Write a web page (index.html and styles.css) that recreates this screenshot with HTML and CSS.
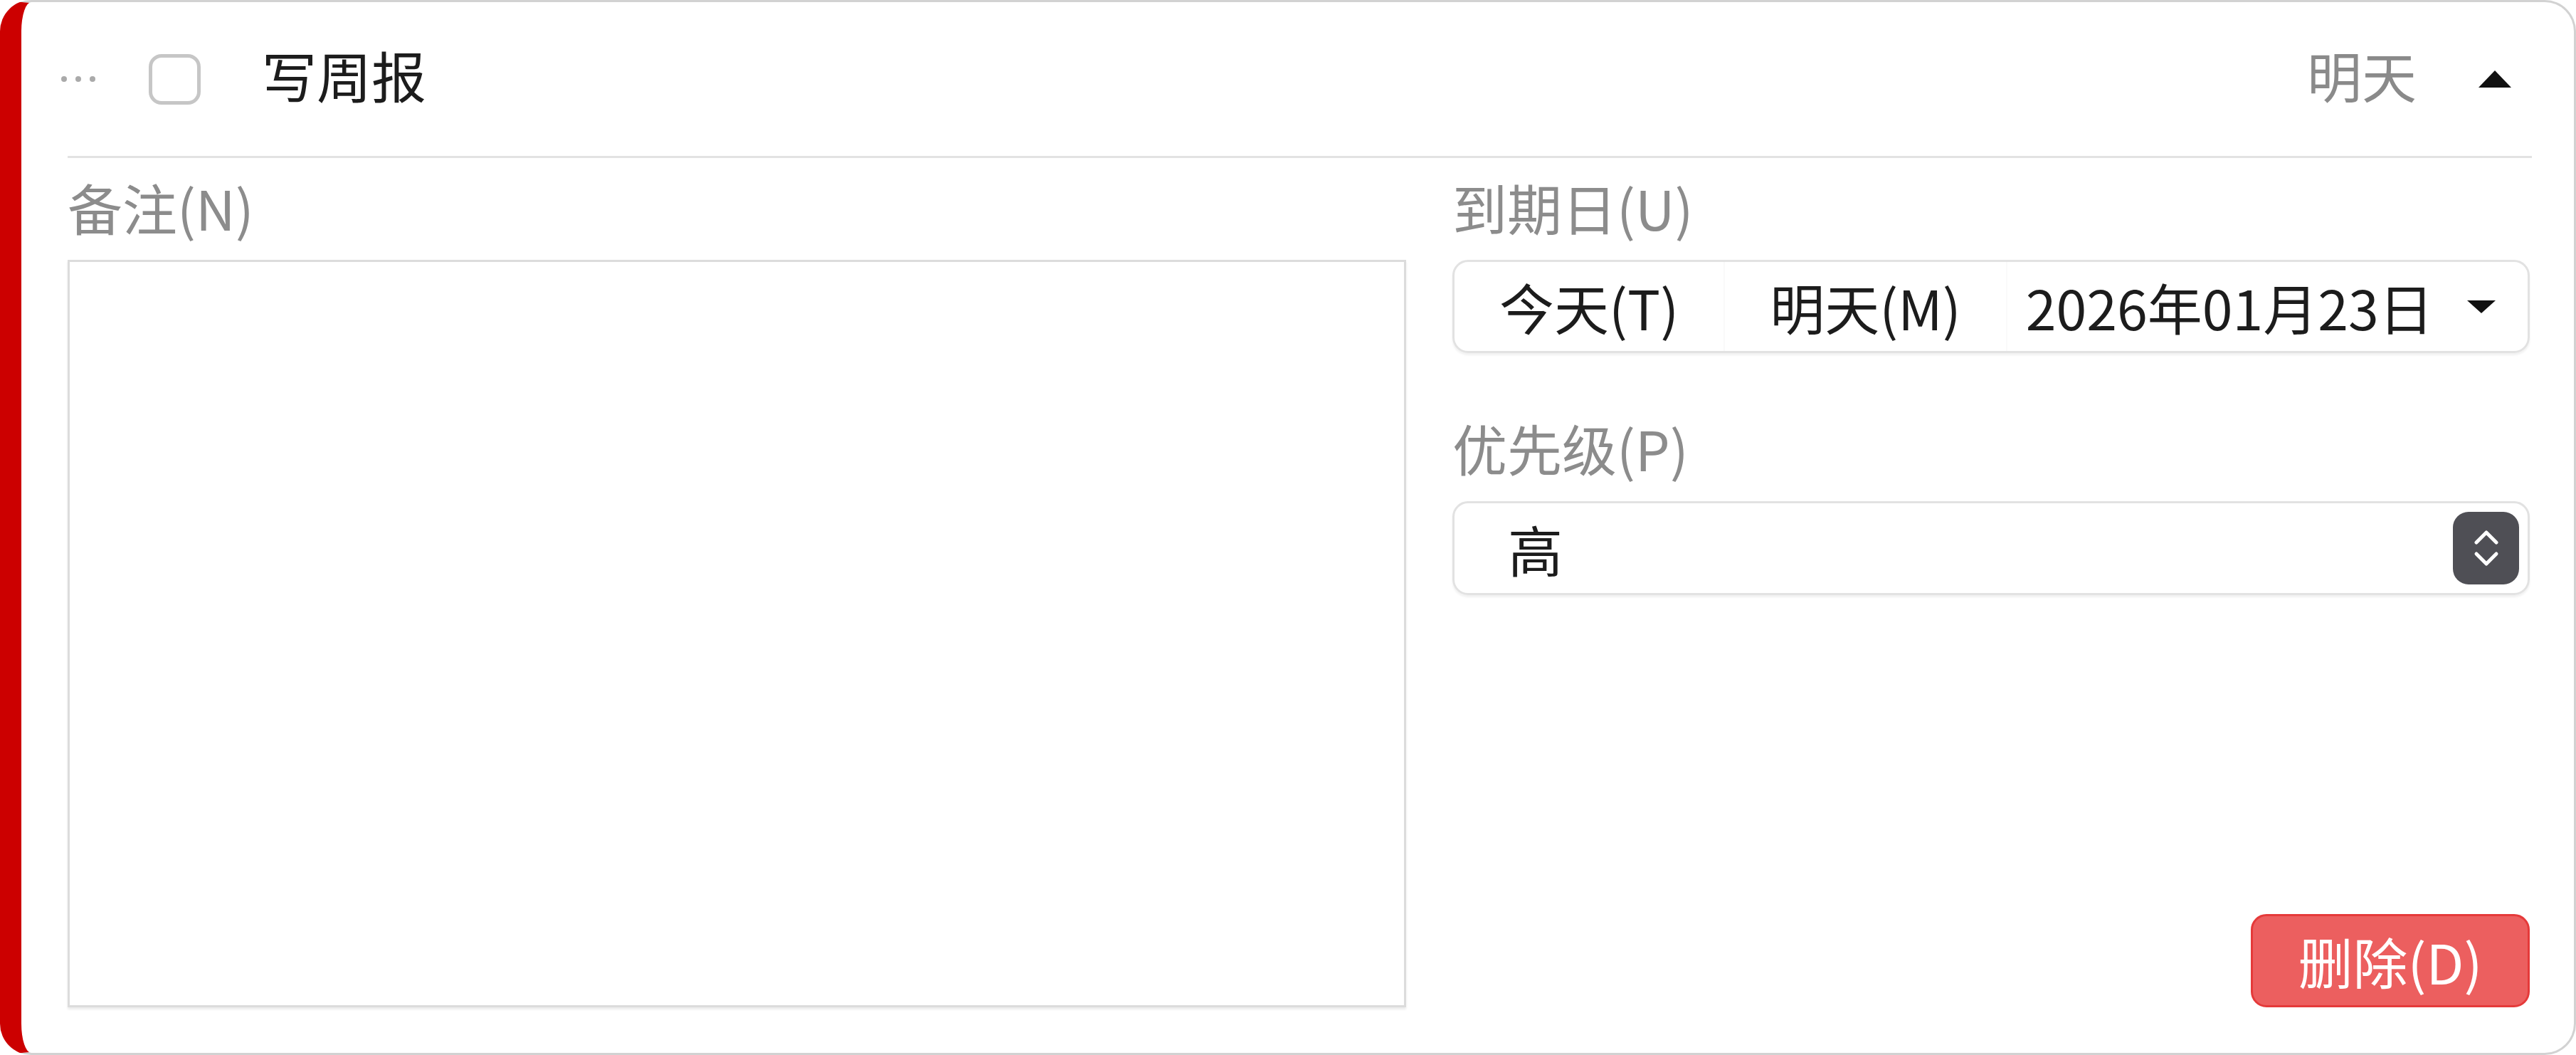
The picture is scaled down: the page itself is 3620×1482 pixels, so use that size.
FILE: index.html
```html
<!DOCTYPE html>
<html lang="zh-CN">
<head>
    <meta charset="UTF-8">
    <meta name="viewport" content="width=device-width, initial-scale=1.0">
    <title>写周报</title>
    <link rel="stylesheet" href="styles.css">
</head>
<body>
    <div class="task-card">
        <div class="task-header">
            <svg class="drag-handle" width="50" height="10" viewBox="0 0 50 10">
                <circle cx="5" cy="5" r="4" fill="#aaaaaa"/>
                <circle cx="25" cy="5" r="4" fill="#aaaaaa"/>
                <circle cx="45" cy="5" r="4" fill="#aaaaaa"/>
            </svg>
            <span class="checkbox"></span>
            <span class="task-title">写周报</span>
            <span class="task-due">明天</span>
            <svg class="collapse-icon" width="48" height="26" viewBox="0 0 48 26">
                <polygon points="24,1 47,25 1,25" fill="#111111"/>
            </svg>
        </div>
        <div class="divider"></div>
        <div class="task-body">
            <div class="notes-col">
                <label class="field-label">备注(N)</label>
                <textarea class="notes"></textarea>
            </div>
            <div class="side-col">
                <label class="field-label">到期日(U)</label>
                <div class="date-picker">
                    <span class="date-seg">今天(T)</span>
                    <span class="date-seg">明天(M)</span>
                    <span class="date-seg date-value">
                        2026年01月23日
                        <svg width="42" height="20" viewBox="0 0 42 20">
                            <polygon points="1,1 41,1 21,19" fill="#111111"/>
                        </svg>
                    </span>
                </div>
                <label class="field-label priority-label">优先级(P)</label>
                <div class="priority-select">
                    <span class="priority-value">高</span>
                    <span class="stepper">
                        <svg width="40" height="64" viewBox="0 0 40 64">
                            <polyline points="6,24 20,10 34,24" fill="none" stroke="#ffffff" stroke-width="5" stroke-linecap="round" stroke-linejoin="round"/>
                            <polyline points="6,40 20,54 34,40" fill="none" stroke="#ffffff" stroke-width="5" stroke-linecap="round" stroke-linejoin="round"/>
                        </svg>
                    </span>
                </div>
                <div class="actions">
                    <button class="delete-btn">删除(D)</button>
                </div>
            </div>
        </div>
    </div>
</body>
</html>
```

FILE: styles.css
```css
html, body {
    margin: 0;
    padding: 0;
    background: #ffffff;
}

body {
    font-family: "Noto Sans CJK SC", "Noto Sans", sans-serif;
    font-size: 77px;
    color: #1c1c1c;
}

.task-card {
    box-sizing: border-box;
    width: 100vw;
    height: 100vh;
    border: 3px solid #d2d2d2;
    border-left: 30px solid #cc0000;
    border-radius: 44px;
    display: flex;
    flex-direction: column;
}

.task-header {
    height: 216px;
    display: flex;
    align-items: center;
    padding: 0 87px 0 55px;
}

.drag-handle {
    margin-right: 74px;
}

.checkbox {
    box-sizing: border-box;
    width: 73px;
    height: 71px;
    border: 5px solid #c6c6c6;
    border-radius: 18px;
    margin-right: 86px;
}

.task-title {
    flex: 1;
    line-height: 100px;
    margin-top: -12px;
}

.task-due {
    color: #8a8a8a;
    margin-right: 86px;
    line-height: 100px;
    margin-top: -12px;
}

.divider {
    height: 3px;
    background: #e2e2e2;
    margin: 0 59px 0 65px;
}

.task-body {
    flex: 1;
    display: flex;
    gap: 65px;
    padding: 19px 62px 64px 65px;
}

.notes-col {
    flex: 0 0 1881px;
    display: flex;
    flex-direction: column;
}

.side-col {
    flex: 1;
    display: flex;
    flex-direction: column;
}

.field-label {
    display: block;
    color: #8c8c8c;
    line-height: 100px;
    margin-bottom: 24px;
}

.notes {
    flex: 1;
    box-sizing: border-box;
    width: 100%;
    border: 3px solid #dcdcdc;
    box-shadow: 0 3px 3px rgba(0, 0, 0, 0.08);
    resize: none;
    outline: none;
    margin: 0;
}

.date-picker {
    box-sizing: border-box;
    height: 131px;
    display: flex;
    align-items: stretch;
    border: 3px solid #e2e2e2;
    border-radius: 22px;
    box-shadow: 0 3px 3px rgba(0, 0, 0, 0.06);
}

.date-seg {
    display: flex;
    align-items: center;
    padding: 0 63px;
    border-right: 2px solid #fafafa;
    white-space: nowrap;
}

.date-value {
    flex: 1;
    border-right: none;
    padding: 0 44px 0 26px;
    justify-content: space-between;
}

.priority-label {
    margin-top: 83px;
    margin-bottom: 25px;
}

.priority-select {
    box-sizing: border-box;
    height: 132px;
    display: flex;
    align-items: center;
    justify-content: space-between;
    border: 3px solid #e2e2e2;
    border-radius: 22px;
    box-shadow: 0 3px 3px rgba(0, 0, 0, 0.06);
    padding: 0 12px 0 75px;
}

.stepper {
    width: 93px;
    height: 102px;
    background: #4f4f55;
    border-radius: 22px;
    display: flex;
    align-items: center;
    justify-content: center;
}

.actions {
    flex: 1;
    display: flex;
    justify-content: flex-end;
    align-items: flex-end;
}

.delete-btn {
    box-sizing: border-box;
    width: 392px;
    height: 131px;
    background: #ec5f5f;
    border: 3px solid #e53a3a;
    border-radius: 22px;
    color: #ffffff;
    font-family: "Noto Sans CJK SC", "Noto Sans", sans-serif;
    font-size: 77px;
    padding: 0;
}
```
